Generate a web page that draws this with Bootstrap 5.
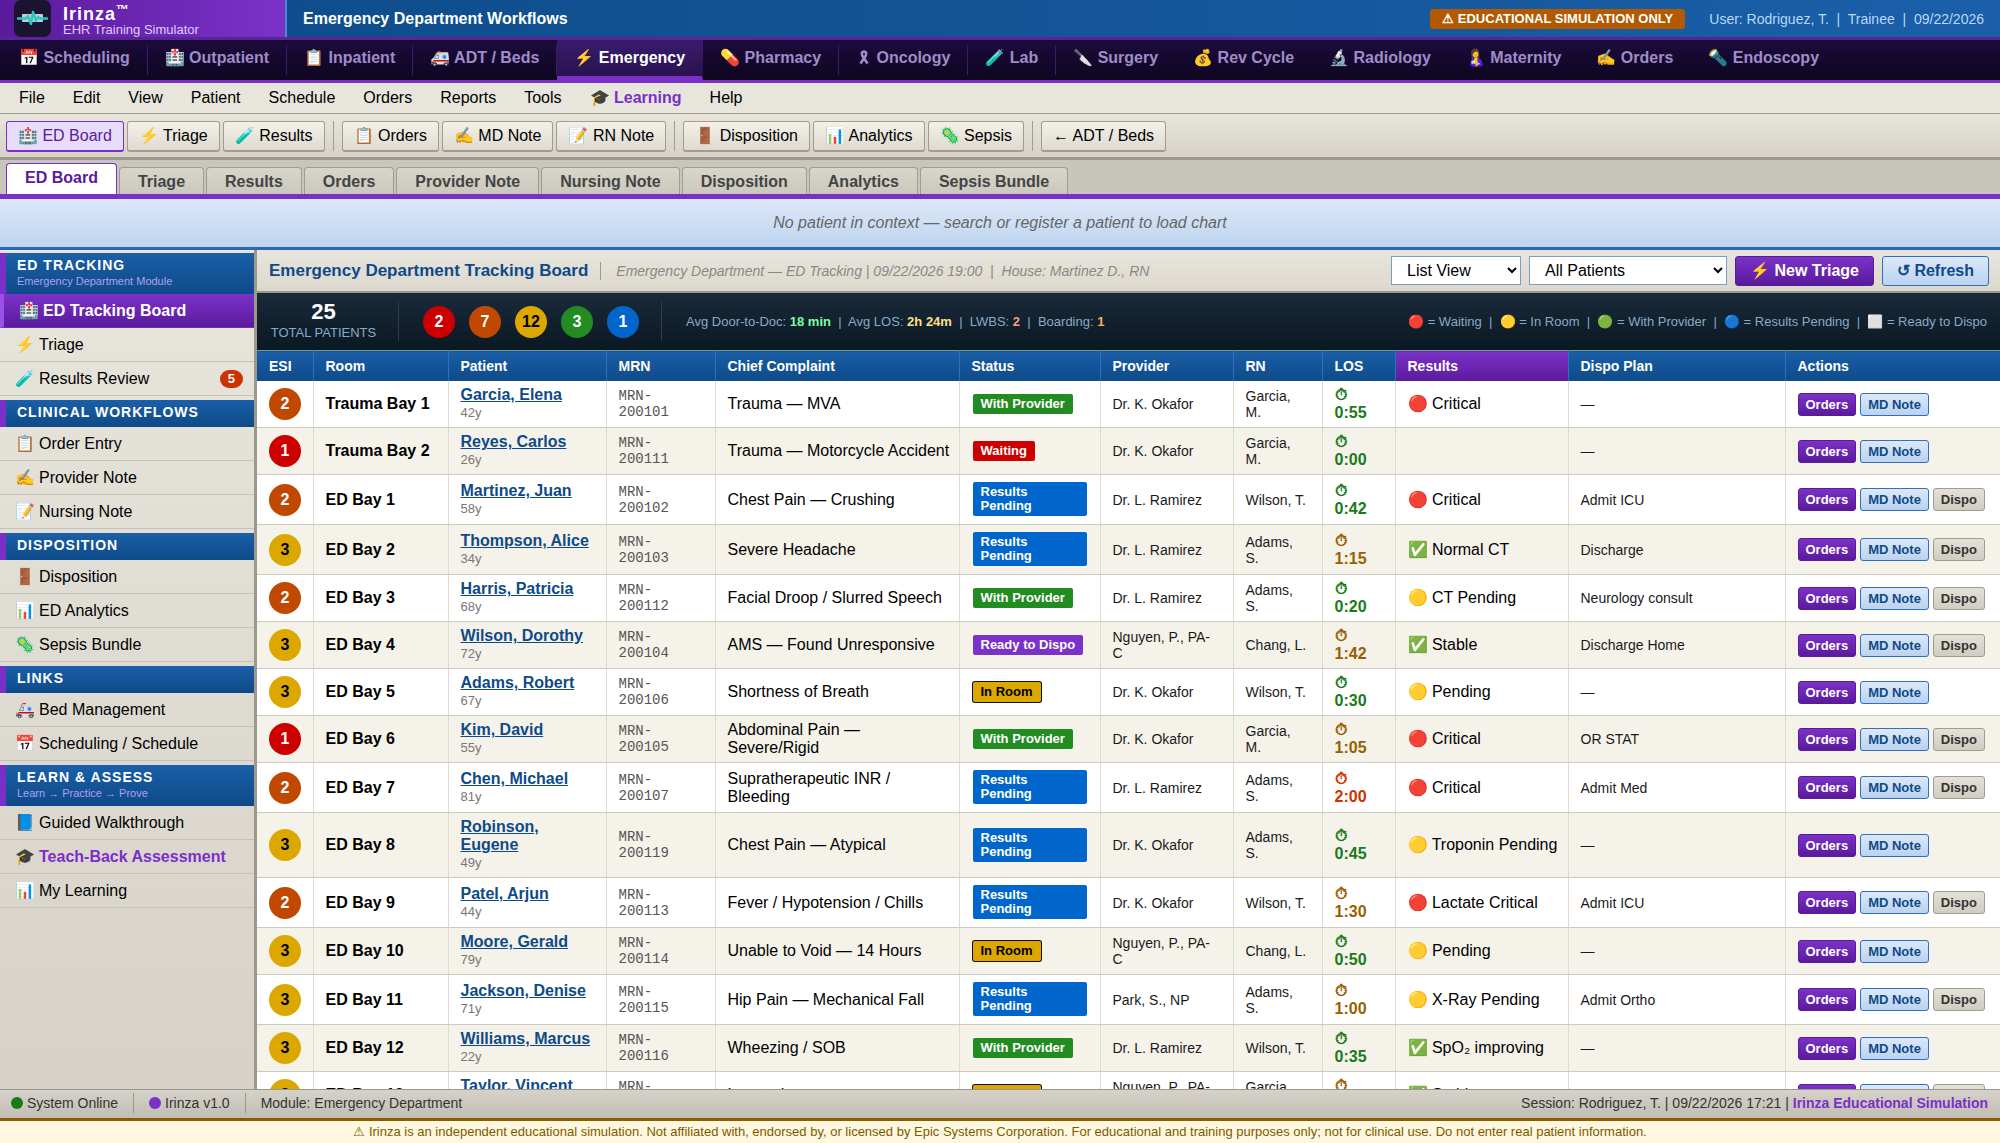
<!DOCTYPE html>
<html lang="en">
<head>
<meta charset="utf-8">
<meta name="viewport" content="width=device-width, initial-scale=1">
<title>Irinza – Emergency Department Workflows</title>
<link rel="stylesheet" href="https://cdn.jsdelivr.net/npm/bootstrap@5.3.0/dist/css/bootstrap.min.css">
<style>
:root{--violet:#7b2fc9;--violet-deep:#5a1a9c;--blue:#1a5fa8;--blue-deep:#0e4a88}
body{font-family:"Liberation Sans",Arial,sans-serif;font-size:16px;line-height:18px;color:#000;background:#e8e5dc}
a{color:inherit;text-decoration:none}
.topbar{background:linear-gradient(90deg,#0d4a87,#1a5fa8);border-bottom:3px solid #5a2494;color:#fff;height:40px}
.brandbox{width:287px;padding-left:14px;background:linear-gradient(90deg,#5a1a9c,#7b32c8);border-right:2px solid #4a8ad0}
.brandname{font-size:18px;line-height:18px;font-weight:700;letter-spacing:1px;padding-top:5px}
.brandname sup{font-size:13px;top:-6px;letter-spacing:0}
.brandsub{font-size:13px;line-height:14px;color:#e0ccf8}
.edu{background:#b35900;border-radius:3px;font-size:13px;line-height:20px;font-weight:700;padding:0 12px}
.who{font-size:14px;color:#b8d8f8}
.modnav{background:linear-gradient(#1c0b3c,#0d0620);border-bottom:3px solid var(--violet);color:#a08cc8;font-weight:700;padding-left:2px}
.modnav a{padding:9px 17px;border-right:1px solid transparent;border-bottom:4px solid transparent;white-space:pre}
.modnav a.ruled{border-image:linear-gradient(transparent 15%,#3a1d66 15%,#3a1d66 85%,transparent 85%) 1;border-image-width:0 1px 0 0}
.modnav a.active{background:linear-gradient(#381c6c,#2a1250);color:#fff;border-bottom-color:var(--violet)}
.modnav svg{margin:0 3px 2px 3px}
.menubar{background:#e8e6dc;border-bottom:1px solid #a09c90;padding:0 5px}
.menubar a{padding:6px 14px}
.toolstrip{background:linear-gradient(#e8e5db,#d6d2c8);border-bottom:3px solid #9c988c;padding:7px 6px 6px;height:46px}
.tool{font-size:16px;line-height:18px;padding:5px 11px;border:1px solid #a09c90;border-radius:3px;background:linear-gradient(#f4f1e9,#dedad0);color:#000;border-bottom-width:2px}
.tool.active{background:#e8dcfc;border-color:var(--violet);color:var(--violet-deep)}
.vr-line{width:1px;background:#a09c90;margin:0 5px}
.tabstrip{background:#c8c5bc;border-bottom:5px solid var(--violet);padding:3px 6px 0;height:39px}
.tabstrip a{font-weight:700;color:#444;border:1px solid #a09c90;border-bottom:0;border-radius:4px 4px 0 0;background:linear-gradient(#d8d5cb,#cbc8be);padding:5px 18px 3px}
.tabstrip a.active{background:#fff;color:var(--violet-deep);border-color:var(--violet);padding:5px 18px 7px}
.ctxbar{background:linear-gradient(#dce8f8,#c0d5f0);border-bottom:3px solid #2f66b8;height:51px;font-style:italic;color:#666}
.side{width:257px;border-right:3px solid #9c988c;background:linear-gradient(#e8e5dc,#d6d2ca)}
.side-head{background:linear-gradient(#1a5fa8,#0e4a88);border-left:6px solid var(--violet);color:#fff;font-size:14px;line-height:17px;font-weight:700;letter-spacing:1px;padding:4px 11px 6px;margin-top:4px}
.side-head.first{margin-top:3px}
.side-head span{display:block;font-size:11px;line-height:14px;font-weight:400;letter-spacing:0;color:#b0a0f0}
.side a{height:34px;padding:0 11px 0 15px;border-bottom:1px solid #c4c1b8}
.side a.active{background:linear-gradient(#7b32c8,#5a1a9c);border-left:4px solid #9b50e8;border-bottom-color:#6a35a8;color:#fff;font-weight:700}
.side i{font-style:normal;width:24px}
.pill{background:#cc3300;color:#fff;font-size:13px;font-weight:700;border-radius:9px;padding:0 8px}
.workhead{background:linear-gradient(#e8e5dc,#dcd8ce);border-bottom:2px solid #98988c;padding:0 11px 0 12px;height:43px}
.workhead h1{font-size:17px;line-height:20px;font-weight:700;color:#0e4a88;margin:0}
.crumb{font-size:14px;font-style:italic;color:#888;border-left:1px solid #999;padding-left:15px;margin-left:12px}
.pick{height:29px;border:1px solid #7a9cc8;background:#fff;color:#000;padding:0 0 0 11px;border-radius:0}
.act{font-weight:700;border-radius:3px;padding:5px 14px;border:1px solid;font-size:16px;line-height:18px}
.go{background:linear-gradient(#7b32c8,#5a1a9c);color:#fff}
.calm{background:linear-gradient(#dce8f8,#bcd2f0);color:#0e4a88}
.plain{background:linear-gradient(#e4e1d8,#cfccc2);color:#333}
.stats{background:linear-gradient(#1a2a3a,#0a1822);color:#88aac8;height:57px;font-size:13px}
.total{width:142px;border-right:1px solid #333a4c;height:39px}
.total b{display:block;font-size:22px;line-height:20px;color:#fff;margin-bottom:2px}
.bubbles{gap:14px;padding:0 22px 0 24px;height:39px;border-right:1px solid #333a4c}
.esi{width:32px;height:32px;border-radius:50%;display:flex;align-items:center;justify-content:center;font-weight:700;font-size:16px;color:#fff}
.e1{background:#c00}.e2{background:#c04800}.e3{background:#dca800;color:#000}.e4{background:#228b22}.e5{background:#0066cc}
.board{table-layout:fixed;width:100%;border-collapse:collapse;background:#fff}
.board th{background:linear-gradient(#1a5fa8,#0e4a88);color:#fff;font-size:14px;line-height:18px;padding:6px 11px 6px 12px;border-right:1px solid #2f70c0;border-top:1px solid #7a9c98}
.board th.hot{background:linear-gradient(#7b32c8,#5a1a9c)}
.board td{padding:5px 11px 5px 12px;border-right:1px solid #dddad4;border-bottom:1px solid #ccc9c2;vertical-align:middle}
.board tbody tr:nth-child(even){background:#f5f2ea}
.board td:nth-child(5),.board td:nth-child(10),.board td:nth-child(12){padding-right:4px}
.board td:nth-child(4),.board td:nth-child(7){padding-right:16px}
.board td:nth-child(8){padding-right:13px}
.board td:nth-child(2){font-weight:700}
.board td:nth-child(3) a{font-weight:700;color:#0e4a88;text-decoration:underline}
.board td:nth-child(3) span{display:block;font-size:13px;line-height:18px;color:#777}
.board td:nth-child(4){font-family:"Liberation Mono",monospace;font-size:14px;line-height:16px;color:#555}
.board td:nth-child(7),.board td:nth-child(8){font-size:14px;line-height:16px;color:#1a1a1a}
.board td:nth-child(11){font-size:14px;color:#1a1a1a}
.board td:nth-child(9){font-weight:700}
.ok{color:#1a7a1a}.slow{color:#986000}.late{color:#cc3300}
.st{display:inline-block;vertical-align:middle;font-size:13px;line-height:14px;font-weight:700;color:#fff;padding:3px 8px;margin:2px 2px 3px 1px;border-radius:2px}
.st-room{color:#000;box-shadow:0 0 0 1px #111}
.st-ready{background:#7b32c8}
.mini{font-size:13px;line-height:15px;font-weight:700;padding:3px 7px;border:1px solid;border-radius:3px}
.mini.go,.act.go{border-color:#5a1a9c}
.mini.calm,.act.calm{border-color:#2f70c0}
.mini.plain{border-color:#a09c90}
.statusbar{background:linear-gradient(#d6d2ca,#c0bdb4);border-top:1px solid #98988c;font-size:14px;color:#333;height:29px;padding:0 12px 2px 11px}
.lamp{width:12px;height:12px;border-radius:50%;margin-right:4px}
.split{width:1px;height:20px;background:#98988c;margin:0 15px}
.legal{background:#fff8e0;border-top:3px solid #8c5c00;color:#7c5a00;font-size:13px;line-height:22px;height:25px}
</style>
<script src="https://cdn.jsdelivr.net/npm/bootstrap@5.3.0/dist/js/bootstrap.bundle.min.js" defer></script>
</head>
<body class="vh-100 d-flex flex-column overflow-hidden">
<header class="topbar d-flex flex-shrink-0">
  <div class="brandbox d-flex align-items-center flex-shrink-0">
    <svg width="37" height="37" viewBox="0 0 37 37" aria-hidden="true"><rect width="37" height="37" rx="7" fill="#1b1430"/><rect x="8" y="14" width="21" height="8" rx="1" fill="#c4ccd4"/><path d="M4 18.500h8l2-2.500 3 8 2-12 3 9 2-4 2 1.500h7" fill="none" stroke="#2cc8c0" stroke-width="2.400" stroke-linejoin="round" stroke-linecap="round"/></svg>
    <div class="ps-2 ms-1"><div class="brandname">Irinza<sup>™</sup></div><div class="brandsub">EHR Training Simulator</div></div>
  </div>
  <div class="d-flex flex-grow-1 align-items-center ps-3 pe-3">
    <strong class="me-auto">Emergency Department Workflows</strong>
    <span class="edu me-4">⚠ EDUCATIONAL SIMULATION ONLY</span>
    <span class="who">User: Rodriguez, T. &nbsp;|&nbsp; Trainee &nbsp;|&nbsp; 09/22/2026</span>
  </div>
</header>
<nav class="modnav d-flex flex-shrink-0" aria-label="Modules">
  <a class="ruled" href="#">📅 Scheduling</a><a class="ruled" href="#">🏥 Outpatient</a><a class="ruled" href="#">📋 Inpatient</a><a class="ruled" href="#">🚑 ADT / Beds</a><a class="active" href="#">⚡ Emergency</a><a class="ruled" href="#">💊 Pharmacy</a><a class="ruled" href="#"><svg width="10" height="15" viewBox="0 0 10 15" aria-hidden="true"><path d="M1.500 13.500 6.500 6C8 3.500 7 1.500 5 1.500S2 3.500 3.500 6l5 7.500" fill="none" stroke="#a08cc8" stroke-width="2.600"/></svg> Oncology</a><a class="ruled" href="#">🧪 Lab</a><a href="#">🔪 Surgery</a><a href="#">💰 Rev Cycle</a><a href="#">🔬 Radiology</a><a href="#">🤱 Maternity</a><a href="#">✍️ Orders</a><a href="#">🔦 Endoscopy</a>
</nav>
<nav class="menubar d-flex flex-shrink-0" aria-label="Menu">
  <a href="#">File</a><a href="#">Edit</a><a href="#">View</a><a href="#">Patient</a><a href="#">Schedule</a><a href="#">Orders</a><a href="#">Reports</a><a href="#">Tools</a><a href="#" class="fw-bold" style="color:var(--violet)">🎓 Learning</a><a href="#">Help</a>
</nav>
<div class="toolstrip d-flex flex-shrink-0 align-items-stretch" role="toolbar">
  <div class="d-flex align-items-center" style="gap:3px">
    <button class="tool active">🏥 ED Board</button><button class="tool">⚡ Triage</button><button class="tool">🧪 Results</button>
    <span class="vr-line align-self-stretch"></span>
    <button class="tool">📋 Orders</button><button class="tool">✍️ MD Note</button><button class="tool">📝 RN Note</button>
    <span class="vr-line align-self-stretch"></span>
    <button class="tool">🚪 Disposition</button><button class="tool">📊 Analytics</button><button class="tool">🦠 Sepsis</button>
    <span class="vr-line align-self-stretch"></span>
    <button class="tool">← ADT / Beds</button>
  </div>
</div>
<nav class="tabstrip d-flex flex-shrink-0 align-items-end" style="gap:2px" aria-label="Views">
  <a class="active" href="#">ED Board</a><a href="#">Triage</a><a href="#">Results</a><a href="#">Orders</a><a href="#">Provider Note</a><a href="#">Nursing Note</a><a href="#">Disposition</a><a href="#">Analytics</a><a href="#">Sepsis Bundle</a>
</nav>
<div class="ctxbar d-flex flex-shrink-0 align-items-center justify-content-center">No patient in context — search or register a patient to load chart</div>

<div class="d-flex flex-grow-1 overflow-hidden">
  <aside class="side flex-shrink-0 overflow-hidden">
    <div class="side-head first">ED TRACKING<span>Emergency Department Module</span></div>
    <a class="active d-flex align-items-center" href="#"><i>🏥</i>ED Tracking Board</a>
    <a class="d-flex align-items-center" href="#"><i>⚡</i>Triage</a>
    <a class="d-flex align-items-center" href="#"><i>🧪</i>Results Review<span class="pill ms-auto">5</span></a>
    <div class="side-head">CLINICAL WORKFLOWS</div>
    <a class="d-flex align-items-center" href="#"><i>📋</i>Order Entry</a>
    <a class="d-flex align-items-center" href="#"><i>✍️</i>Provider Note</a>
    <a class="d-flex align-items-center" href="#"><i>📝</i>Nursing Note</a>
    <div class="side-head">DISPOSITION</div>
    <a class="d-flex align-items-center" href="#"><i>🚪</i>Disposition</a>
    <a class="d-flex align-items-center" href="#"><i>📊</i>ED Analytics</a>
    <a class="d-flex align-items-center" href="#"><i>🦠</i>Sepsis Bundle</a>
    <div class="side-head">LINKS</div>
    <a class="d-flex align-items-center" href="#"><i>🚑</i>Bed Management</a>
    <a class="d-flex align-items-center" href="#"><i>📅</i>Scheduling / Schedule</a>
    <div class="side-head">LEARN &amp; ASSESS<span>Learn → Practice → Prove</span></div>
    <a class="d-flex align-items-center" href="#"><i>📘</i>Guided Walkthrough</a>
    <a class="d-flex align-items-center fw-bold" href="#"><i>🎓</i><span style="color:var(--violet)">Teach-Back Assessment</span></a>
    <a class="d-flex align-items-center" href="#"><i>📊</i>My Learning</a>
  </aside>
  <main class="flex-grow-1 d-flex flex-column overflow-hidden">
    <div class="workhead d-flex align-items-center flex-shrink-0">
      <h1>Emergency Department Tracking Board</h1>
      <div class="crumb me-auto">Emergency Department — ED Tracking | 09/22/2026 19:00 &nbsp;|&nbsp; House: Martinez D., RN</div>
      <select class="pick me-2" style="width:130px" aria-label="View"><option>List View</option></select>
      <select class="pick me-2" style="width:198px" aria-label="Patients"><option>All Patients</option></select>
      <button class="act go me-2">⚡ New Triage</button>
      <button class="act calm">↺ Refresh</button>
    </div>
    <div class="stats d-flex align-items-center flex-shrink-0">
      <div class="total text-center pe-2"><b>25</b>TOTAL PATIENTS</div>
      <div class="bubbles d-flex align-items-center">
        <span class="esi e1">2</span><span class="esi e2">7</span><span class="esi e3">12</span><span class="esi e4">3</span><span class="esi e5">1</span>
      </div>
      <div class="ms-4 me-auto">Avg Door-to-Doc: <b style="color:#7dffa0">18 min</b> &nbsp;|&nbsp; Avg LOS: <b style="color:#ffe08a">2h 24m</b> &nbsp;|&nbsp; LWBS: <b style="color:#ff9a8a">2</b> &nbsp;|&nbsp; Boarding: <b style="color:#ffb050">1</b></div>
      <div style="padding-right:13px">🔴 = Waiting &nbsp;|&nbsp; 🟡 = In Room &nbsp;|&nbsp; 🟢 = With Provider &nbsp;|&nbsp; 🔵 = Results Pending &nbsp;|&nbsp; ⬜ = Ready to Dispo</div>
    </div>
    <div class="flex-grow-1 overflow-hidden">
      <table class="board">
        <colgroup><col style="width:56px"><col style="width:135px"><col style="width:158px"><col style="width:109px"><col style="width:244px"><col style="width:141px"><col style="width:133px"><col style="width:89px"><col style="width:73px"><col style="width:173px"><col style="width:217px"><col style="width:215px"></colgroup>
        <thead><tr><th>ESI</th><th>Room</th><th>Patient</th><th>MRN</th><th>Chief Complaint</th><th>Status</th><th>Provider</th><th>RN</th><th>LOS</th><th class="hot">Results</th><th>Dispo Plan</th><th>Actions</th></tr></thead>
        <tbody>
          <tr><td><span class="esi e2">2</span></td><td>Trauma Bay 1</td><td><a href="#">Garcia, Elena</a><span>42y</span></td><td>MRN-200101</td><td>Trauma — MVA</td><td><span class="st e4">With Provider</span></td><td>Dr. K. Okafor</td><td>Garcia, M.</td><td class="ok">⏱<br>0:55</td><td>🔴 Critical</td><td>—</td><td><div class="d-flex gap-1"><button class="mini go">Orders</button><button class="mini calm">MD Note</button></div></td></tr>
          <tr><td><span class="esi e1">1</span></td><td>Trauma Bay 2</td><td><a href="#">Reyes, Carlos</a><span>26y</span></td><td>MRN-200111</td><td>Trauma — Motorcycle Accident</td><td><span class="st e1">Waiting</span></td><td>Dr. K. Okafor</td><td>Garcia, M.</td><td class="ok">⏱<br>0:00</td><td></td><td>—</td><td><div class="d-flex gap-1"><button class="mini go">Orders</button><button class="mini calm">MD Note</button></div></td></tr>
          <tr><td><span class="esi e2">2</span></td><td>ED Bay 1</td><td><a href="#">Martinez, Juan</a><span>58y</span></td><td>MRN-200102</td><td>Chest Pain — Crushing</td><td><span class="st e5">Results Pending</span></td><td>Dr. L. Ramirez</td><td>Wilson, T.</td><td class="ok">⏱<br>0:42</td><td>🔴 Critical</td><td>Admit ICU</td><td><div class="d-flex gap-1"><button class="mini go">Orders</button><button class="mini calm">MD Note</button><button class="mini plain">Dispo</button></div></td></tr>
          <tr><td><span class="esi e3">3</span></td><td>ED Bay 2</td><td><a href="#">Thompson, Alice</a><span>34y</span></td><td>MRN-200103</td><td>Severe Headache</td><td><span class="st e5">Results Pending</span></td><td>Dr. L. Ramirez</td><td>Adams, S.</td><td class="slow">⏱<br>1:15</td><td>✅ Normal CT</td><td>Discharge</td><td><div class="d-flex gap-1"><button class="mini go">Orders</button><button class="mini calm">MD Note</button><button class="mini plain">Dispo</button></div></td></tr>
          <tr><td><span class="esi e2">2</span></td><td>ED Bay 3</td><td><a href="#">Harris, Patricia</a><span>68y</span></td><td>MRN-200112</td><td>Facial Droop / Slurred Speech</td><td><span class="st e4">With Provider</span></td><td>Dr. L. Ramirez</td><td>Adams, S.</td><td class="ok">⏱<br>0:20</td><td>🟡 CT Pending</td><td>Neurology consult</td><td><div class="d-flex gap-1"><button class="mini go">Orders</button><button class="mini calm">MD Note</button><button class="mini plain">Dispo</button></div></td></tr>
          <tr><td><span class="esi e3">3</span></td><td>ED Bay 4</td><td><a href="#">Wilson, Dorothy</a><span>72y</span></td><td>MRN-200104</td><td>AMS — Found Unresponsive</td><td><span class="st st-ready">Ready to Dispo</span></td><td>Nguyen, P., PA-C</td><td>Chang, L.</td><td class="slow">⏱<br>1:42</td><td>✅ Stable</td><td>Discharge Home</td><td><div class="d-flex gap-1"><button class="mini go">Orders</button><button class="mini calm">MD Note</button><button class="mini plain">Dispo</button></div></td></tr>
          <tr><td><span class="esi e3">3</span></td><td>ED Bay 5</td><td><a href="#">Adams, Robert</a><span>67y</span></td><td>MRN-200106</td><td>Shortness of Breath</td><td><span class="st e3 st-room">In Room</span></td><td>Dr. K. Okafor</td><td>Wilson, T.</td><td class="ok">⏱<br>0:30</td><td>🟡 Pending</td><td>—</td><td><div class="d-flex gap-1"><button class="mini go">Orders</button><button class="mini calm">MD Note</button></div></td></tr>
          <tr><td><span class="esi e1">1</span></td><td>ED Bay 6</td><td><a href="#">Kim, David</a><span>55y</span></td><td>MRN-200105</td><td>Abdominal Pain — Severe/Rigid</td><td><span class="st e4">With Provider</span></td><td>Dr. K. Okafor</td><td>Garcia, M.</td><td class="slow">⏱<br>1:05</td><td>🔴 Critical</td><td>OR STAT</td><td><div class="d-flex gap-1"><button class="mini go">Orders</button><button class="mini calm">MD Note</button><button class="mini plain">Dispo</button></div></td></tr>
          <tr><td><span class="esi e2">2</span></td><td>ED Bay 7</td><td><a href="#">Chen, Michael</a><span>81y</span></td><td>MRN-200107</td><td>Supratherapeutic INR / Bleeding</td><td><span class="st e5">Results Pending</span></td><td>Dr. L. Ramirez</td><td>Adams, S.</td><td class="late">⏱<br>2:00</td><td>🔴 Critical</td><td>Admit Med</td><td><div class="d-flex gap-1"><button class="mini go">Orders</button><button class="mini calm">MD Note</button><button class="mini plain">Dispo</button></div></td></tr>
          <tr><td><span class="esi e3">3</span></td><td>ED Bay 8</td><td><a href="#">Robinson, Eugene</a><span>49y</span></td><td>MRN-200119</td><td>Chest Pain — Atypical</td><td><span class="st e5">Results Pending</span></td><td>Dr. K. Okafor</td><td>Adams, S.</td><td class="ok">⏱<br>0:45</td><td>🟡 Troponin Pending</td><td>—</td><td><div class="d-flex gap-1"><button class="mini go">Orders</button><button class="mini calm">MD Note</button></div></td></tr>
          <tr><td><span class="esi e2">2</span></td><td>ED Bay 9</td><td><a href="#">Patel, Arjun</a><span>44y</span></td><td>MRN-200113</td><td>Fever / Hypotension / Chills</td><td><span class="st e5">Results Pending</span></td><td>Dr. K. Okafor</td><td>Wilson, T.</td><td class="slow">⏱<br>1:30</td><td>🔴 Lactate Critical</td><td>Admit ICU</td><td><div class="d-flex gap-1"><button class="mini go">Orders</button><button class="mini calm">MD Note</button><button class="mini plain">Dispo</button></div></td></tr>
          <tr><td><span class="esi e3">3</span></td><td>ED Bay 10</td><td><a href="#">Moore, Gerald</a><span>79y</span></td><td>MRN-200114</td><td>Unable to Void — 14 Hours</td><td><span class="st e3 st-room">In Room</span></td><td>Nguyen, P., PA-C</td><td>Chang, L.</td><td class="ok">⏱<br>0:50</td><td>🟡 Pending</td><td>—</td><td><div class="d-flex gap-1"><button class="mini go">Orders</button><button class="mini calm">MD Note</button></div></td></tr>
          <tr><td><span class="esi e3">3</span></td><td>ED Bay 11</td><td><a href="#">Jackson, Denise</a><span>71y</span></td><td>MRN-200115</td><td>Hip Pain — Mechanical Fall</td><td><span class="st e5">Results Pending</span></td><td>Park, S., NP</td><td>Adams, S.</td><td class="slow">⏱<br>1:00</td><td>🟡 X-Ray Pending</td><td>Admit Ortho</td><td><div class="d-flex gap-1"><button class="mini go">Orders</button><button class="mini calm">MD Note</button><button class="mini plain">Dispo</button></div></td></tr>
          <tr><td><span class="esi e3">3</span></td><td>ED Bay 12</td><td><a href="#">Williams, Marcus</a><span>22y</span></td><td>MRN-200116</td><td>Wheezing / SOB</td><td><span class="st e4">With Provider</span></td><td>Dr. L. Ramirez</td><td>Wilson, T.</td><td class="ok">⏱<br>0:35</td><td>✅ SpO₂ improving</td><td>—</td><td><div class="d-flex gap-1"><button class="mini go">Orders</button><button class="mini calm">MD Note</button></div></td></tr>
          <tr><td><span class="esi e3">3</span></td><td>ED Bay 13</td><td><a href="#">Taylor, Vincent</a><span>38y</span></td><td>MRN-200117</td><td>Laceration</td><td><span class="st e3 st-room">In Room</span></td><td>Nguyen, P., PA-C</td><td>Garcia, M.</td><td class="slow">⏱<br>1:10</td><td>✅ Stable</td><td>Discharge</td><td><div class="d-flex gap-1"><button class="mini go">Orders</button><button class="mini calm">MD Note</button><button class="mini plain">Dispo</button></div></td></tr>
        </tbody>
      </table>
    </div>
  </main>
</div>
<footer class="flex-shrink-0">
  <div class="statusbar d-flex align-items-center">
    <span class="lamp" style="background:#1a7a1a"></span>System Online<span class="split"></span><span class="lamp" style="background:#7b2fc9"></span>Irinza v1.0<span class="split"></span>Module: Emergency Department
    <span class="ms-auto">Session: Rodriguez, T. | 09/22/2026 17:21 | <b style="color:var(--violet)">Irinza Educational Simulation</b></span>
  </div>
  <div class="legal text-center">⚠ Irinza is an independent educational simulation. Not affiliated with, endorsed by, or licensed by Epic Systems Corporation. For educational and training purposes only; not for clinical use. Do not enter real patient information.</div>
</footer>
</body>
</html>
